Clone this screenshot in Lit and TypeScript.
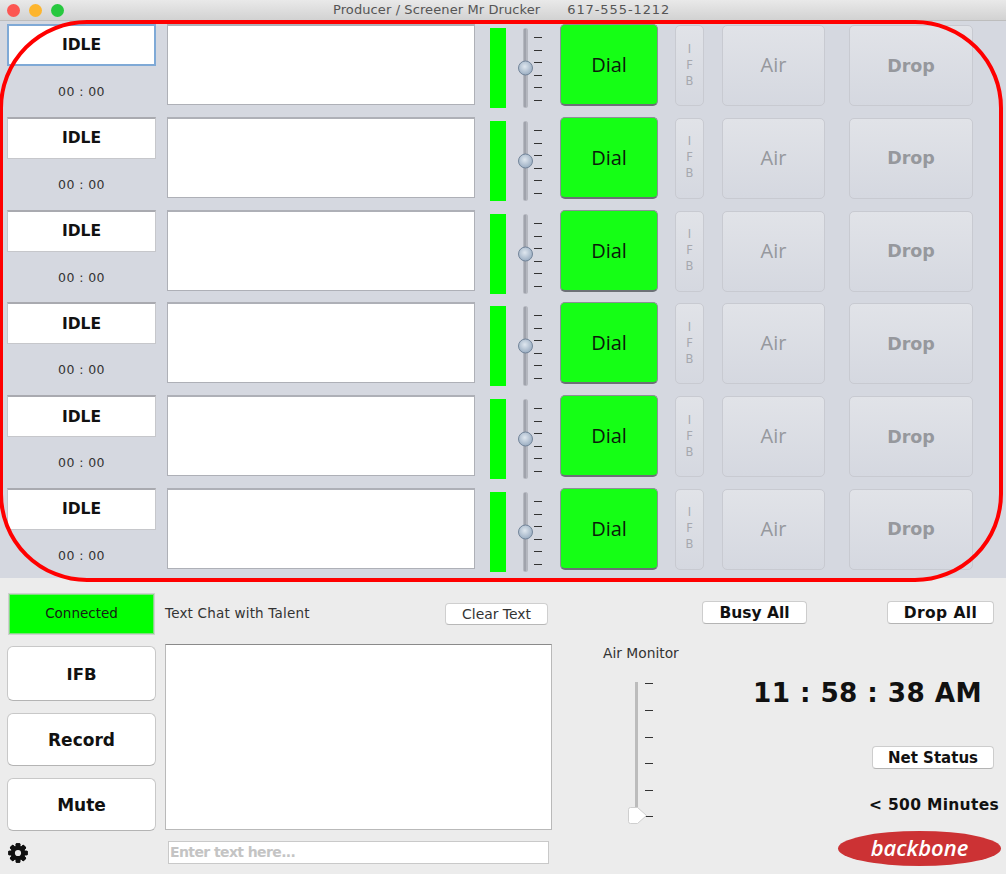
import { LitElement, html, css, svg } from "lit";
import { customElement } from "lit/decorators.js";

@customElement("app-root")
export class AppRoot extends LitElement {
  static styles = css`
    :host { display: block; width: 1006px; height: 874px; position: relative; overflow: hidden; background: #ececec; font-family: "DejaVu Sans", "Liberation Sans", sans-serif; color: #111; }
    * { box-sizing: border-box; }
    .titlebar { height: 21px; display: flex; align-items: center; background: linear-gradient(#e9e9e9, #d2d2d2); border-bottom: 1px solid #bdbdbd; position: relative; padding-left: 7px; gap: 9px; }
    .light { width: 13px; height: 13px; border-radius: 50%; }
    .red { background: #fc5652; } .amber { background: #fdb52e; } .green { background: #27c83f; }
    .title { position: absolute; left: 333px; top: 2px; display: flex; gap: 27px; font-size: 13px; color: #555; line-height: 16px; white-space: nowrap; letter-spacing: .1px; }
    .phone { letter-spacing: .9px; }
    .lines { height: 557px; background: #d5d8e0; padding: 3px 0 0 7px; display: grid; grid-auto-rows: 82px; row-gap: 10.8px; }
    .row { display: flex; align-items: flex-start; }
    .status { width: 149px; display: flex; flex-direction: column; align-items: stretch; }
    .idle { height: 42px; background: #fff; border: 1px solid #c6c7cb; border-top: 2px solid #a9aab0; display: flex; align-items: center; justify-content: center; font-weight: 700; font-size: 15.5px; color: #111; }
    .idle.focus { border: 2px solid #7fa9d6; }
    .timer { text-align: center; font-size: 12.5px; margin-top: 17px; line-height: 18px; color: #333; letter-spacing: .4px; }
    .text { margin-left: 11px; width: 308px; height: 81px; background: #fff; border: 1px solid #aeb0b7; border-top-width: 2px; }
    .meter { margin-left: 15px; width: 16px; height: 80px; margin-top: 4px; background: #00ff00; }
    .slider { display: block; margin-top: 4px; }
    .dial { margin-left: 6px; width: 98px; height: 82px; background: #15ff15; border: 1px solid #8c9096; border-bottom: 2px solid #6c7076; border-radius: 5px; display: flex; align-items: center; justify-content: center; font-family: "Open Sans", sans-serif; font-size: 20px; color: #0a1a0a; }
    .disabled { background: linear-gradient(#e1e3e8, #d5d8e0); border: 1px solid #c8cad1; border-radius: 5px; display: flex; align-items: center; justify-content: center; color: #96989d; height: 81px; margin-top: 1px; }
    .ifb { width: 29px; margin-left: 17px; flex-direction: column; font-size: 11.5px; line-height: 16px; color: #a6a8ae; padding-bottom: 2px; }
    .air { width: 103px; margin-left: 18px; font-family: "Open Sans", sans-serif; font-size: 20px; font-weight: 500; padding-bottom: 2px; }
    .drop { width: 124px; margin-left: 24px; font-size: 17.5px; font-weight: 700; }
    .bottom { height: 296px; display: grid; grid-template-columns: 149px 387px 454px; column-gap: 9px; padding: 15px 0 0 7px; position: relative; }
    .bottom > .right { margin-left: -9px; }
    .left { display: flex; flex-direction: column; }
    .connected { height: 42px; background: #00ff00; border: 2px solid #7fe07f; outline: 1px solid #d0d0d0; outline-offset: -1px; display: flex; align-items: center; justify-content: center; font-size: 13.5px; color: #152015; margin-left: 1px; width: 147px; padding-bottom: 2px; }
    .big { background: #fff; border: 1px solid #c8c8c8; border-bottom-color: #b4b4b4; border-radius: 6px; display: flex; align-items: center; justify-content: center; font-weight: 700; font-size: 17px; color: #111; }
    .ifbbig { height: 55px; margin-top: 11px; font-size: 16.5px; padding-top: 2px; }
    .rec { height: 53px; margin-top: 12px; }
    .mute { height: 53px; margin-top: 12px; }
    .gear { display: block; margin: 12px 0 0 1px; }
    .chat { display: flex; flex-direction: column; }
    .chathead { height: 40px; display: flex; align-items: center; justify-content: space-between; padding-right: 4px; font-size: 13.5px; color: #333; letter-spacing: .2px; }
    .clear { width: 103px; height: 22px; margin-top: 2px; background: #fff; border: 1px solid #cfcfcf; border-bottom-color: #b8b8b8; border-radius: 4px; display: flex; align-items: center; justify-content: center; font-size: 13.9px; color: #333; letter-spacing: 0; padding-bottom: 1px; }
    .chatbox { margin-top: 11px; height: 186px; background: #fff; border: 1px solid #b9b9b9; border-top-color: #8a8a8a; }
    .entry { margin: 11px 3px 0 3px; height: 23px; background: #fff; border: 1px solid #c9c9c9; font-size: 14px; color: #c4c4c4; padding-left: 1px; line-height: 20px; font-weight: 700; letter-spacing: -.6px; white-space: nowrap; }
    .right { display: flex; flex-direction: column; }
    .toprow { display: flex; align-items: flex-start; padding-left: 150px; margin-top: 8px; }
    .pill { height: 23px; background: #fff; border: 1px solid #cdcdcd; border-bottom-color: #b4b4b4; border-radius: 4px; display: flex; align-items: center; justify-content: center; font-weight: 700; font-size: 15.5px; color: #111; }
    .busy { width: 105px; }
    .dropall { width: 107px; margin-left: 80px; letter-spacing: .4px; }
    .lower { display: flex; margin-top: 20px; }
    .monitor { width: 176px; padding-left: 51px; }
    .monlabel { font-size: 13.8px; color: #333; line-height: 18px; white-space: nowrap; }
    .monslider { display: block; margin: 20px 0 0 25px; }
    .info { width: 278px; display: flex; flex-direction: column; position: relative; }
    .clock { font-weight: 700; font-size: 26.3px; color: #111; margin: 30px 0 0 25px; line-height: 38px; white-space: nowrap; letter-spacing: .4px; }
    .net { width: 122px; margin: 34px 0 0 144px; font-size: 15px; }
    .mins { font-weight: 700; font-size: 15.5px; color: #111; margin: 26px 0 0 141px; line-height: 20px; white-space: nowrap; letter-spacing: .3px; }
    .logo { width: 163px; height: 35px; margin: 16px 0 0 110px; border-radius: 50%; background: #cc3234; display: flex; align-items: center; justify-content: center; color: #fff; font-family: "Open Sans", sans-serif; font-style: italic; font-weight: 600; font-size: 22px; line-height: 1; padding-bottom: 3px; }
    .ring { position: absolute; left: -1px; top: 20px; width: 1004px; height: 562px; border: 4px solid #ff0000; border-radius: 88px; pointer-events: none; }
  `;

  private sliderSvg(i: number) {
    const ticks = [9, 22, 34, 47, 59, 72];
    return html`<svg class="slider" width="48" height="80" viewBox="0 0 48 80">
      <defs><radialGradient id="th${i}" cx=".45" cy=".4" r=".7"><stop offset="0" stop-color="#dfe7ef"/><stop offset="1" stop-color="#8ea3ba"/></radialGradient></defs>
      <rect x="17" y="0" width="5" height="80" rx="2.5" fill="#b4b7bf"/>
      <rect x="18" y="1" width="2" height="78" fill="#a0a3ac"/>
      ${ticks.map((y) => svg`<rect x="28" y="${y}" width="8" height="1" fill="#333"/>`)}
      <circle cx="19.5" cy="40" r="7" fill="url(#th${i})" stroke="#73859a"/>
    </svg>`;
  }

  private row(i: number) {
    return html`<div class="row">
      <div class="status"><div class="idle ${i === 0 ? "focus" : ""}">IDLE</div><div class="timer">00 : 00</div></div>
      <div class="text"></div>
      <div class="meter"></div>
      ${this.sliderSvg(i)}
      <div class="dial">Dial</div>
      <div class="disabled ifb"><span>I</span><span>F</span><span>B</span></div>
      <div class="disabled air">Air</div>
      <div class="disabled drop">Drop</div>
    </div>`;
  }

  private gear() {
    const teeth = [0, 45, 90, 135, 180, 225, 270, 315];
    return html`<svg class="gear" width="20" height="20" viewBox="0 0 20 20">
      ${teeth.map((a) => svg`<rect x="7.7" y="0.3" width="4.6" height="19.4" rx="1" fill="#111" transform="rotate(${a} 10 10)"/>`)}
      <circle cx="10" cy="10" r="7.3" fill="#111"/>
      <circle cx="10" cy="10" r="3.1" fill="#ececec"/>
    </svg>`;
  }

  private monitorSvg() {
    const ticks = [1, 28, 55, 81, 108, 134];
    return html`<svg class="monslider" width="30" height="146" viewBox="0 0 30 146">
      <rect x="7" y="0" width="3" height="130" fill="#bcbcbc"/>
      ${ticks.map((y) => svg`<rect x="17" y="${y}" width="8" height="1" fill="#333"/>`)}
      <path d="M2.5 125.5 h7 l9 8 -9 8 h-7 a2 2 0 0 1 -2 -2 v-12 a2 2 0 0 1 2 -2 z" fill="#fff" stroke="#cfcfcf"/>
    </svg>`;
  }

  render() {
    return html`
      <div class="titlebar">
        <div class="light red"></div><div class="light amber"></div><div class="light green"></div>
        <div class="title"><span>Producer / Screener Mr Drucker</span><span class="phone">617-555-1212</span></div>
      </div>
      <div class="lines">${[0, 1, 2, 3, 4, 5].map((i) => this.row(i))}</div>
      <div class="bottom">
        <div class="left">
          <div class="connected">Connected</div>
          <div class="big ifbbig">IFB</div>
          <div class="big rec">Record</div>
          <div class="big mute">Mute</div>
          ${this.gear()}
        </div>
        <div class="chat">
          <div class="chathead"><span>Text Chat with Talent</span><div class="clear">Clear Text</div></div>
          <div class="chatbox"></div>
          <div class="entry">Enter text here...</div>
        </div>
        <div class="right">
          <div class="toprow"><div class="pill busy">Busy All</div><div class="pill dropall">Drop All</div></div>
          <div class="lower">
            <div class="monitor"><div class="monlabel">Air Monitor</div>${this.monitorSvg()}</div>
            <div class="info">
              <div class="clock">11 : 58 : 38 AM</div>
              <div class="pill net">Net Status</div>
              <div class="mins">&lt; 500 Minutes</div>
              <div class="logo">backbone</div>
            </div>
          </div>
        </div>
      </div>
      <div class="ring"></div>
    `;
  }
}
